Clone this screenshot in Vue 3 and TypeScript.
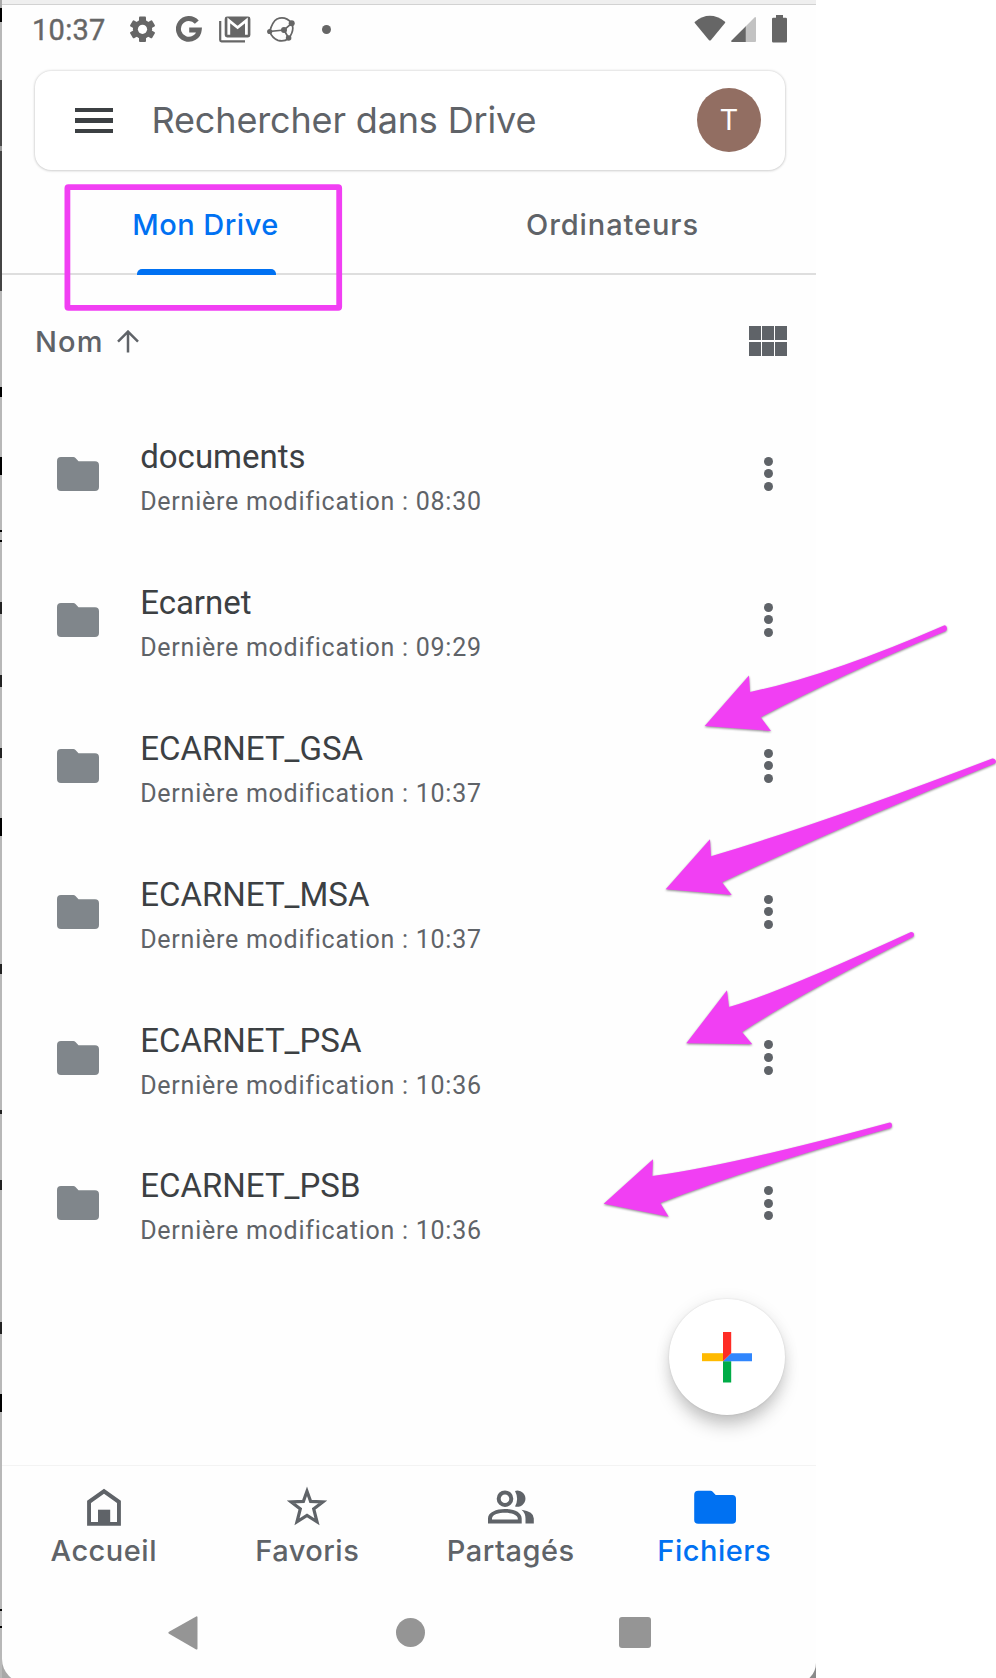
<script setup lang="ts">
interface DriveFolder {
  name: string
  time: string
}

interface Arrow {
  id: string
  path: string
}

const folders: DriveFolder[] = [
  { name: 'documents', time: '08:30' },
  { name: 'Ecarnet', time: '09:29' },
  { name: 'ECARNET_GSA', time: '10:37' },
  { name: 'ECARNET_MSA', time: '10:37' },
  { name: 'ECARNET_PSA', time: '10:36' },
  { name: 'ECARNET_PSB', time: '10:36' },
]

const arrows: Arrow[] = [
  { id: 'gsa', path: 'M704.7 726 L749 675.5 L750 692 Q830 675 944 625.4 Q946.5 625 947 628 Q947 630 946 631 Q840 675 760.7 717.3 L771 731 Z' },
  { id: 'msa', path: 'M665.7 889.3 L710 839.3 L711 856.3 Q827 821.7 992.3 758.5 Q995 758 996 761 Q996 763 994.7 763.5 Q853 821 722 882.3 L731.7 895 Z' },
  { id: 'psa', path: 'M686.3 1043.3 L727 990.3 L729 1007 Q777 993.5 911 932 Q914 932 914 934.7 Q914 936.5 912.7 937 Q803 992 742 1032 L752.3 1044.3 Z' },
  { id: 'psb', path: 'M603.7 1203.7 L653 1159.3 L652.3 1176 Q733 1165 889.7 1122.4 Q892 1122.5 892 1125.3 Q892 1127.5 890.7 1128 Q750 1168 660.3 1203 L668.7 1216.7 Z' },
]
</script>

<template>
  <div class="page">
    <div class="desktop">
      <div class="edge"></div>
      <main class="phone">
        <div class="window-bar"></div>

        <header class="status">
          <span class="clock">10:37</span>
          <svg class="gear" viewBox="0 0 25 27">
            <g fill="#666">
              <circle cx="12.5" cy="13.3" r="9.6" />
              <rect v-for="a in [0, 60, 120]" :key="a" x="9" y="0.6" width="7" height="25.4" rx="1" :transform="`rotate(${a} 12.5 13.3)`" />
            </g>
            <circle cx="12.5" cy="13.3" r="4.6" fill="#fff" />
          </svg>
          <svg class="google" viewBox="0 0 26 27">
            <path d="M20.8 6.2 A10.4 10.4 0 1 0 23.2 13.9 H13.2" fill="none" stroke="#666" stroke-width="5" />
          </svg>
          <svg class="gmail" viewBox="0 0 32 27">
            <path d="M1.2 5 V24 Q1.2 25.3 2.5 25.3 H26" fill="none" stroke="#666" stroke-width="2.2" />
            <rect x="5.7" y="0.6" width="25.7" height="20.8" rx="2.4" fill="#666" />
            <path d="M9.8 18.8 V4.5 L18.6 11.5 L27.4 4.5 V18.8" fill="none" stroke="#fff" stroke-width="2.8" />
          </svg>
          <svg class="ball" viewBox="0 0 28 27">
            <g fill="none" stroke="#666" stroke-width="1.7">
              <path d="M2.7 15.5 Q5.5 5.5 10 3 Q18 -0.5 24.7 7 Q28 14 21.6 22.5 Q17 26 11 24.4 Q5 22 2.7 15.5 L17 14 L24.7 7.3 M17 14 L21.6 22" />
            </g>
            <g fill="#666">
              <circle cx="2.7" cy="15.5" r="2.6" />
              <circle cx="17" cy="14" r="3" />
              <circle cx="24.7" cy="7.3" r="3" />
              <circle cx="21.6" cy="22" r="2.8" />
            </g>
          </svg>
          <span class="more-dot"></span>
          <svg class="wifi" viewBox="0 0 32 26">
            <path d="M1 6.7 Q15.8 -5.2 31 6.7 Q31.5 7.3 31 8 L17 25 Q15.9 26 14.8 25 L0.8 8 Q0.3 7.3 1 6.7Z" fill="#666" />
          </svg>
          <svg class="signal" viewBox="0 0 25 25">
            <path d="M24 0 Q25 0 25 1 V24 Q25 25 24 25 H14.6 V9.4Z" fill="#c2c2c2" />
            <path d="M14.8 9.2 V25 H1 Q-0.4 24.4 0.5 23.5Z" fill="#666" />
          </svg>
          <svg class="battery" viewBox="0 0 15 28">
            <path d="M4 0 H11 V2.7 H13.8 Q15 2.7 15 4 V26.3 Q15 27.5 13.8 27.5 H1.2 Q0 27.5 0 26.3 V4 Q0 2.7 1.2 2.7 H4Z" fill="#666" />
          </svg>
        </header>

        <div class="search">
          <div class="menu"><i></i><i></i><i></i></div>
          <span class="placeholder">Rechercher dans Drive</span>
          <span class="avatar">T</span>
        </div>

        <nav class="tabs">
          <div class="tab active"><span>Mon Drive</span></div>
          <div class="tab wide"><span>Ordinateurs</span></div>
        </nav>

        <div class="sort">
          <span class="sort-name">Nom</span>
          <svg class="sort-arrow" viewBox="0 0 22 23">
            <path d="M11 22.5 V2 M1 11.6 L11 1.6 L21 11.6" fill="none" stroke="#5f6368" stroke-width="2.5" />
          </svg>
          <div class="grid-icon"><i v-for="n in 6" :key="n"></i></div>
        </div>

        <ul class="files">
          <li v-for="f in folders" :key="f.name" class="file">
            <svg class="folder" viewBox="0 0 42 34">
              <path d="M4 0 H16.3 Q17.6 0 18.5 1 L21.5 4.2 H38 Q42 4.2 42 8.2 V30 Q42 34 38 34 H4 Q0 34 0 30 V4 Q0 0 4 0Z" fill="#80868b" />
            </svg>
            <div class="file-text">
              <div class="file-name">{{ f.name }}</div>
              <div class="file-date">Dernière modification : {{ f.time }}</div>
            </div>
            <div class="dots"><i></i><i></i><i></i></div>
          </li>
        </ul>

        <div class="fab-row">
          <div class="fab">
            <svg viewBox="0 0 50 51">
              <path d="M0 21.2 H21 V29.2 H0Z" fill="#ffba00" />
              <path d="M21 29.2 H29.2 V50.5 H21Z" fill="#00ac47" />
              <path d="M21 29.2 L29.2 21.2 H50 V29.2Z" fill="#3086fd" />
              <path d="M21 0 H29.2 V21.2 L21 29.2Z" fill="#fe2c25" />
            </svg>
          </div>
        </div>

        <nav class="bottom">
          <div class="item">
            <svg viewBox="0 0 48 42">
              <path fill-rule="evenodd" d="M24 3.7 L40.9 15.7 V40.8 H7.1 V15.7Z M24 8.7 L11 18 V36.9 H37 V18Z" fill="#5f6368" />
              <path d="M18 24.7 H30.2 V39 H18Z" fill="#5f6368" />
            </svg>
            <span>Accueil</span>
          </div>
          <div class="item">
            <svg viewBox="0 0 48 42">
              <path d="M24 6.3 L27.6 16.4 L39.8 16.9 L30.7 23.9 L34 36.8 L24 30.4 L14 36.8 L17.3 23.9 L8.2 16.9 L20.4 16.4Z" fill="none" stroke="#5f6368" stroke-width="3.2" />
            </svg>
            <span>Favoris</span>
          </div>
          <div class="item">
            <svg viewBox="0 0 48 42">
              <circle cx="18" cy="13.7" r="6.3" fill="none" stroke="#5f6368" stroke-width="4" />
              <path d="M28 5.9 A8.1 8.1 0 1 1 28 21.4 Q32.2 13.7 28 5.9Z" fill="#5f6368" />
              <path fill-rule="evenodd" d="M1 38.5 V33.5 C1 20.8 34.7 20.8 34.7 33.5 V38.5Z M5 34.6 H30.8 V33.2 C30 26 6 26 5 33.2Z" fill="#5f6368" />
              <path d="M34.5 24.8 Q46.8 26.5 46.8 33.5 V38.5 H38.5 V33.5 Q38.5 28.2 34.5 24.8Z" fill="#5f6368" />
            </svg>
            <span>Partagés</span>
          </div>
          <div class="item selected">
            <svg viewBox="0 0 48 42">
              <path transform="translate(4.2 5.7)" d="M4 0 H16.3 Q17.6 0 18.5 1 L21.5 4.2 H38 Q41.8 4.2 41.8 8 V29.2 Q41.8 33 38 33 H4 Q0 33 0 29.2 V4 Q0 0 4 0Z" fill="#0071f2" />
            </svg>
            <span>Fichiers</span>
          </div>
        </nav>

        <div class="system">
          <svg class="back" viewBox="0 0 30 34">
            <path d="M28.2 0.4 Q29.5 0 29.5 1.5 V32.5 Q29.5 34 28.2 33.4 L1 17.8 Q-0.3 16.8 1 15.8Z" fill="#959595" />
          </svg>
          <span class="home"></span>
          <span class="recent"></span>
        </div>
      </main>
    </div>

    <svg class="annotations" viewBox="0 0 996 1678">
      <rect x="67.4" y="187.2" width="271.8" height="120.6" rx="1" fill="none" stroke="#f13ff3" stroke-width="5.8" />
      <path v-for="a in arrows" :key="a.id" class="arrow" :d="a.path" />
    </svg>
  </div>
</template>

<style>
body {
  margin: 0;
  background: #fff;
}
</style>

<style scoped>
.page {
  position: relative;
  width: 996px;
  height: 1678px;
  overflow: hidden;
  background: #fff;
  font-family: Inter, Roboto, sans-serif;
  color: #5f6368;
}
.desktop {
  display: flex;
  width: 816px;
  height: 1684px;
  background: linear-gradient(90deg, #a8a8a8, #8a8a8a);
}
.edge {
  flex: none;
  width: 2px;
  background: linear-gradient(
    #aaa 0 8px, #000 8px 22px, #b8b8b8 22px 80px, #4a4a4a 80px 146px, #999 146px 151px, #444 151px 291px,
    #b8b8b8 291px 387px, #000 387px 397px, #b8b8b8 397px 457px, #000 457px 475px, #b8b8b8 475px 530px,
    #000 530px 532px, #b8b8b8 532px 540px, #000 540px 542px, #b8b8b8 542px 602px, #222 602px 614px,
    #b8b8b8 614px 675px, #222 675px 687px, #b8b8b8 687px 748px, #222 748px 758px, #b8b8b8 758px 818px,
    #000 818px 836px, #b8b8b8 836px 964px, #222 964px 974px, #b8b8b8 974px 1110px, #222 1110px 1114px,
    #b8b8b8 1114px 1180px, #222 1180px 1190px, #b8b8b8 1190px 1322px, #222 1322px 1334px, #b8b8b8 1334px 1394px,
    #000 1394px 1412px, #b8b8b8 1412px 1609px, #000 1609px 1611px, #b8b8b8 1611px 1626px, #000 1626px 1628px,
    #b8b8b8 1628px
  );
}
.phone {
  display: flex;
  flex-direction: column;
  width: 814px;
  height: 1683px;
  overflow: hidden;
  border-radius: 0 0 20px 24px;
  background: #fefefe;
}
.window-bar {
  flex: none;
  height: 4px;
  background: #efefef;
  border-bottom: 1px solid #d2d2d2;
}
.status {
  flex: none;
  display: flex;
  align-items: center;
  height: 48px;
  padding-left: 30px;
}
.clock {
  width: 98px;
  padding-top: 2px;
  font: 400 29px/46px Roboto, sans-serif;
  color: #666;
  letter-spacing: 0.3px;
  -webkit-text-stroke: 0.4px #666;
}
.gear { width: 25px; height: 27px; margin-right: 21px; }
.google { width: 26px; height: 27px; margin-right: 17px; }
.gmail { width: 32px; height: 27px; margin-right: 16px; }
.ball { width: 28px; height: 27px; margin-right: 27px; }
.more-dot { width: 9px; height: 9px; border-radius: 50%; background: #666; }
.wifi { width: 32px; height: 26px; margin: 0 5px 2px auto; }
.signal { width: 25px; height: 25px; margin-right: 16px; }
.battery { width: 15px; height: 28px; margin-right: 29px; }

.search {
  flex: none;
  display: flex;
  align-items: center;
  width: 750px;
  height: 99px;
  margin: 18px 0 0 33px;
  border-radius: 16px;
  background: #fff;
  box-shadow: 0 0 3px rgba(0, 0, 0, 0.2), 0 1px 3px rgba(0, 0, 0, 0.1);
}
.menu {
  display: flex;
  flex-direction: column;
  gap: 6.5px;
  width: 38px;
  margin-left: 39.5px;
}
.menu i { height: 4.2px; background: #3c4043; }
.placeholder {
  flex: 1;
  margin: 0 0 2px 39px;
  font-size: 36px;
  line-height: 48px;
  letter-spacing: -0.15px;
  white-space: nowrap;
}
.avatar {
  width: 64px;
  height: 64px;
  margin: 0 24px 1px 0;
  border-radius: 50%;
  background: #926e62;
  color: #fff;
  font: 400 29px/64px Roboto, sans-serif;
  text-align: center;
}

.tabs {
  flex: none;
  display: flex;
  height: 103px;
  border-bottom: 2px solid #dedede;
}
.tab {
  flex: 1;
  font-size: 29px;
  font-weight: 500;
  line-height: 40px;
  letter-spacing: 0.5px;
  text-align: center;
  padding-top: 35px;
  white-space: nowrap;
}
.tab.wide { letter-spacing: 0.9px; }
.tab.active {
  display: flex;
  flex-direction: column;
  align-items: center;
  color: #0071f2;
}
.tab.active::after {
  content: '';
  width: 139px;
  height: 6px;
  margin: 24px 0 0 1px;
  border-radius: 5px 5px 0 0;
  background: #0071f2;
  flex: none;
}

.sort {
  flex: none;
  display: flex;
  align-items: center;
  height: 132px;
  margin-bottom: -6px;
  padding: 0 29px 0 33px;
}
.sort-name {
  width: 82px;
  font-size: 29px;
  font-weight: 500;
  letter-spacing: 1.1px;
}
.sort-arrow { width: 22px; height: 23px; }
.grid-icon {
  display: grid;
  grid-template-columns: repeat(3, 11.6px);
  grid-template-rows: repeat(2, 14px);
  gap: 1.6px;
  margin-left: auto;
}
.grid-icon i { background: #5f6368; }

.files {
  flex: none;
  margin: 0;
  padding: 0;
  list-style: none;
}
.file {
  display: flex;
  align-items: center;
  height: 145.9px;
  padding: 0 43.5px 0 54.5px;
}
.folder { width: 42px; height: 34px; }
.file-text {
  flex: 1;
  margin-left: 41.7px;
  font-family: Roboto, sans-serif;
}
.file-name {
  margin-top: 10px;
  font-size: 33px;
  line-height: 45px;
  color: #3c4043;
}
.file-date {
  font-size: 25px;
  line-height: 45px;
  letter-spacing: 0.75px;
  white-space: nowrap;
}
.dots {
  display: flex;
  flex-direction: column;
  gap: 3.6px;
  width: 9px;
}
.dots i {
  width: 9px;
  height: 9px;
  border-radius: 50%;
  background: #5f6368;
}

.fab-row {
  flex: 1;
  display: flex;
  justify-content: flex-end;
  padding: 16px 31px 0 0;
}
.fab {
  display: flex;
  align-items: center;
  justify-content: center;
  width: 116px;
  height: 116px;
  margin-top: 7px;
  border-radius: 50%;
  background: #fff;
  box-shadow: 0 13px 18px -3px rgba(0, 0, 0, 0.22), 0 1px 16px rgba(0, 0, 0, 0.08), 0 0 2px rgba(0, 0, 0, 0.12);
}
.fab svg { width: 50px; height: 51px; }

.bottom {
  flex: none;
  display: flex;
  height: 97px;
  border-top: 1px solid #f3f3f3;
  padding-top: 19px;
}
.item {
  flex: 1;
  display: flex;
  flex-direction: column;
  align-items: center;
  font-size: 29px;
  font-weight: 500;
  line-height: 40px;
  letter-spacing: 0.5px;
}
.item svg { width: 48px; height: 42px; margin-bottom: 4px; }
.selected { color: #0071f2; }

.system {
  flex: none;
  display: flex;
  align-items: center;
  height: 101px;
}
.back { width: 30px; height: 34px; margin-left: 166px; }
.home {
  width: 29.5px;
  height: 29.5px;
  margin-left: 197.5px;
  border-radius: 50%;
  background: #959595;
}
.recent {
  width: 31.5px;
  height: 31px;
  margin-left: 194px;
  border-radius: 3px;
  background: #959595;
}

.annotations {
  position: absolute;
  left: 0;
  top: 0;
  width: 996px;
  height: 1678px;
  pointer-events: none;
}
.arrow {
  fill: #f13ff3;
  filter: drop-shadow(0 1.5px 1.2px rgba(0, 0, 0, 0.45));
}
</style>
